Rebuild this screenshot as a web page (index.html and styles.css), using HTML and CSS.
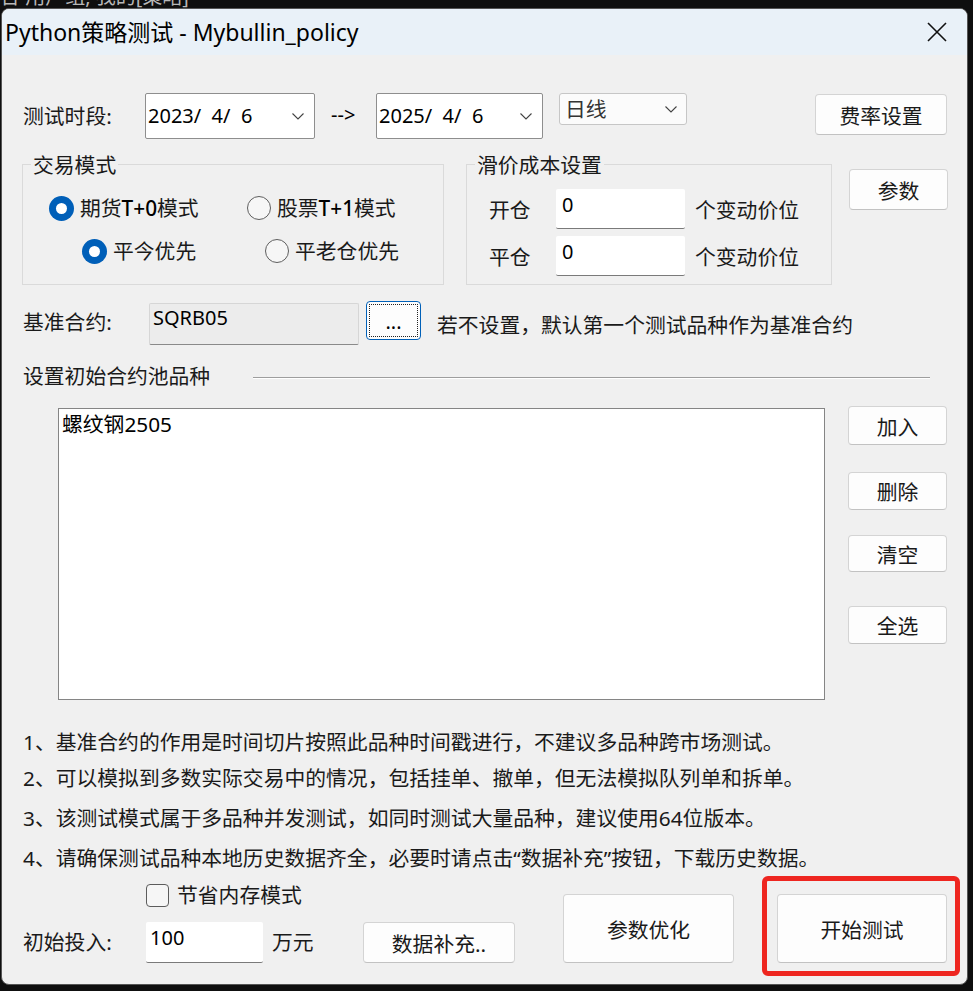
FILE: index.html
```html
<!DOCTYPE html>
<html lang="zh-CN">
<head>
<meta charset="utf-8">
<title>Python策略测试 - Mybullin_policy</title>
<link rel="stylesheet" href="styles.css">
</head>
<body>
<div class="backdrop"><span>合 用户组, 我的[策略]</span></div>
<div class="window">
  <div class="titlebar">
    <span class="title">Python策略测试 - Mybullin_policy</span>
    <svg class="close" viewBox="0 0 20 20" aria-label="关闭"><path d="M1 1 L19 19 M19 1 L1 19" stroke="#111" stroke-width="1.6" fill="none"/></svg>
  </div>
  <div class="content">
    <div class="row row-dates">
      <span class="lbl lbl-date">测试时段:</span>
      <div class="datebox date1"><span class="dtext">2023/  4/  6</span><svg class="chev" viewBox="0 0 12 7"><path d="M0.5 0.5 L6 6 L11.5 0.5" stroke="#444" stroke-width="1.1" fill="none"/></svg></div>
      <span class="arrow">--&gt;</span>
      <div class="datebox date2"><span class="dtext">2025/  4/  6</span><svg class="chev" viewBox="0 0 12 7"><path d="M0.5 0.5 L6 6 L11.5 0.5" stroke="#444" stroke-width="1.1" fill="none"/></svg></div>
      <div class="combo"><span>日线</span><svg class="chev" viewBox="0 0 12 7"><path d="M0.5 0.5 L6 6 L11.5 0.5" stroke="#444" stroke-width="1.1" fill="none"/></svg></div>
      <div class="btn btn-fee">费率设置</div>
    </div>

    <div class="row row-groups">
      <div class="group group-mode">
        <span class="legend">交易模式</span>
        <div class="radio-row">
          <div class="ritem ritem-1"><span class="radio on"></span><span>期货<b class="lat">T+0</b>模式</span></div>
          <div class="ritem"><span class="radio off"></span><span>股票<b class="lat">T+1</b>模式</span></div>
        </div>
        <div class="radio-row radio-row-2">
          <div class="ritem ritem-3"><span class="radio on"></span><span>平今优先</span></div>
          <div class="ritem"><span class="radio off"></span><span>平老仓优先</span></div>
        </div>
      </div>
      <div class="group group-slip">
        <span class="legend">滑价成本设置</span>
        <div class="slip-row">
          <span class="slip-lbl">开仓</span>
          <div class="edit slip-edit">0</div>
          <span class="slip-unit">个变动价位</span>
        </div>
        <div class="slip-row slip-row-2">
          <span class="slip-lbl">平仓</span>
          <div class="edit slip-edit">0</div>
          <span class="slip-unit">个变动价位</span>
        </div>
      </div>
      <div class="btn btn-param">参数</div>
    </div>

    <div class="row row-bench">
      <span class="lbl lbl-bench">基准合约:</span>
      <div class="bench-field">SQRB05</div>
      <div class="btn btn-dots"><span class="focus">...</span></div>
      <span class="bench-hint">若不设置，默认第一个测试品种作为基准合约</span>
    </div>

    <div class="row row-pool">
      <span class="pool-lbl">设置初始合约池品种</span>
      <span class="pool-line"></span>
    </div>

    <div class="row row-list">
      <div class="listbox"><div class="list-item">螺纹钢2505</div></div>
      <div class="list-btns">
        <div class="btn btn-add">加入</div>
        <div class="btn btn-del">删除</div>
        <div class="btn btn-clear">清空</div>
        <div class="btn btn-all">全选</div>
      </div>
    </div>

    <div class="notes">
      <p class="note n1">1、基准合约的作用是时间切片按照此品种时间戳进行，不建议多品种跨市场测试。</p>
      <p class="note n2">2、可以模拟到多数实际交易中的情况，包括挂单、撤单，但无法模拟队列单和拆单。</p>
      <p class="note n3">3、该测试模式属于多品种并发测试，如同时测试大量品种，建议使用64位版本。</p>
      <p class="note n4">4、请确保测试品种本地历史数据齐全，必要时请点击“数据补充”按钮，下载历史数据。</p>
    </div>

    <div class="bottom">
      <div class="bottom-left">
        <div class="cb-row"><span class="checkbox"></span><span class="cb-lbl">节省内存模式</span></div>
        <div class="invest-row">
          <span class="lbl lbl-invest">初始投入:</span>
          <div class="edit invest-edit">100</div>
          <span class="unit">万元</span>
          <div class="btn btn-data">数据补充..</div>
        </div>
      </div>
      <div class="btn btn-opt">参数优化</div>
      <div class="btn btn-start">开始测试</div>
      <div class="highlight"></div>
    </div>
  </div>
</div>
</body>
</html>
```

FILE: styles.css
```css
* { box-sizing: border-box; }
html, body { margin: 0; padding: 0; }
body {
  width: 973px;
  height: 991px;
  overflow: hidden;
  background: #0f0f0f;
  font-family: "Noto Sans", "Noto Sans CJK SC", sans-serif;
  font-size: 20.8px;
  color: #1a1a1a;
}
.backdrop {
  height: 8px;
  overflow: hidden;
  color: #b8b8b8;
  font-size: 20px;
  line-height: 20px;
}
.backdrop span { display: block; margin-top: -13px; }

.window {
  margin-left: 1px;
  width: 967px;
  height: 977px;
  border: 1px solid #555;
  border-radius: 8px;
  background: #f0f0f0;
  overflow: hidden;
  display: flex;
  flex-direction: column;
}
.titlebar {
  flex: none;
  height: 46px;
  background: #e9f1f8;
  display: flex;
  align-items: center;
  justify-content: space-between;
  padding-left: 3px;
  padding-right: 20px;
}
.title { font-size: 23px; line-height: 30px; color: #000; }
.close { width: 20px; height: 20px; display: block; }

.content { position: relative; flex: 1; }
.row { display: flex; align-items: flex-start; }
.lbl { flex: none; white-space: nowrap; }

/* row 1 */
.row-dates { margin-top: 38px; height: 47px; }
.lbl-date { margin-left: 21px; width: 122px; line-height: 46px; }
.datebox {
  flex: none;
  height: 46px;
  background: #fff;
  border: 1px solid #8e8e8e;
  border-radius: 2px;
  display: flex;
  align-items: center;
  justify-content: space-between;
  padding: 0 10px 0 2px;
  font-size: 20px;
  color: #000;
}
.date1 { width: 170px; }
.date2 { width: 167px; margin-left: 16px; }
.dtext { white-space: pre; line-height: 30px; }
.chev { width: 12px; height: 7px; display: block; }
.arrow { margin-left: 16px; width: 29px; line-height: 44px; font-size: 20px; color: #000; white-space: nowrap; }
.combo {
  flex: none;
  margin-left: 16px;
  width: 128px;
  height: 32px;
  background: #fbfbfb;
  border: 1px solid #c6c6c6;
  border-radius: 3px;
  display: flex;
  align-items: center;
  justify-content: space-between;
  padding: 0 9px 0 5px;
  color: #333;
  line-height: 30px;
}
.btn {
  flex: none;
  background: #fdfdfd;
  border: 1px solid #d4d4d4;
  border-bottom-color: #c2c2c2;
  border-radius: 4px;
  display: flex;
  align-items: center;
  justify-content: center;
  color: #1a1a1a;
  white-space: nowrap;
}
.btn-fee { margin-left: 128px; margin-top: 1px; width: 132px; height: 41px; }

/* row 2: groups */
.row-groups { margin-top: 24px; }
.group {
  position: relative;
  flex: none;
  height: 121px;
  border: 1px solid #dadada;
}
.legend {
  position: absolute;
  top: -11px;
  left: 8px;
  padding: 0 2px;
  background: #f0f0f0;
  line-height: 22px;
  white-space: nowrap;
}
.group-mode { margin-left: 20px; width: 422px; padding-top: 30px; }
.radio-row { display: flex; height: 26px; align-items: center; }
.radio-row-2 { margin-top: 17px; }
.ritem { display: flex; align-items: center; gap: 6px; white-space: nowrap; line-height: 26px; }
.ritem-1 { margin-left: 26px; width: 198px; }
.ritem-3 { margin-left: 59px; width: 183px; }
.lat { font-weight: 500; color: #000; }
.radio { flex: none; width: 25px; height: 25px; border-radius: 50%; }
.radio.on {
  background: #005fb8;
  display: flex;
  align-items: center;
  justify-content: center;
}
.radio.on::after {
  content: "";
  width: 11px;
  height: 11px;
  border-radius: 50%;
  background: #fff;
}
.radio.off { width: 24px; height: 24px; border: 1.6px solid #5e5e5e; background: #f6f6f6; }

.group-slip { margin-left: 22px; width: 366px; padding-top: 24px; }
.slip-row { display: flex; align-items: center; height: 40px; }
.slip-row-2 { margin-top: 7px; }
.slip-lbl { margin-left: 22px; width: 67px; white-space: nowrap; }
.edit {
  flex: none;
  background: #fff;
  border-bottom: 1px solid #7a7a7a;
  border-radius: 2px;
  padding-left: 6px;
  font-size: 20px;
  line-height: 31px;
  color: #000;
}
.slip-edit { width: 129px; height: 40px; }
.slip-unit { margin-left: 10px; white-space: nowrap; }
.btn-param { margin-left: 17px; margin-top: 5px; width: 99px; height: 41px; }

/* row 3 */
.row-bench { margin-top: 16px; height: 48px; }
.lbl-bench { margin-left: 21px; width: 126px; line-height: 42px; }
.bench-field {
  flex: none;
  margin-top: 2px;
  width: 210px;
  height: 42px;
  background: #ececec;
  border: 1px solid #d6d6d6;
  border-bottom-color: #8a8a8a;
  border-radius: 2px;
  padding-left: 3px;
  font-size: 20px;
  line-height: 28px;
  color: #000;
}
.btn-dots {
  margin-left: 7px;
  width: 55px;
  height: 39px;
  border-color: #0060b8;
  padding: 2px;
}
.btn-dots .focus {
  width: 100%;
  height: 100%;
  border: 1px dotted #222;
  display: flex;
  align-items: center;
  justify-content: center;
  font-size: 20px;
  color: #000;
  padding-top: 2px;
}
.bench-hint { margin-left: 16px; line-height: 48px; white-space: nowrap; }

/* row 4 */
.row-pool { margin-top: 12px; height: 30px; }
.pool-lbl { margin-left: 21px; width: 230px; line-height: 30px; white-space: nowrap; }
.pool-line {
  margin-top: 16px;
  width: 677px;
  height: 2px;
  border-top: 1px solid #9e9e9e;
  border-bottom: 1px solid #fff;
}

/* row 5 */
.row-list { margin-top: 15px; height: 294px; }
.listbox {
  flex: none;
  margin-left: 56px;
  margin-top: 2px;
  width: 767px;
  height: 292px;
  background: #fff;
  border: 1px solid #858585;
}
.list-item { padding-left: 3px; line-height: 30px; color: #000; }
.list-btns { margin-left: 23px; width: 99px; display: flex; flex-direction: column; }
.list-btns .btn { width: 99px; height: 38px; }
.list-btns .btn-add { height: 39px; }
.list-btns .btn-del { margin-top: 27px; }
.list-btns .btn-clear { margin-top: 25px; height: 37px; }
.list-btns .btn-all { margin-top: 34px; }

/* notes */
.notes { margin-top: 24px; padding-left: 21px; }
.note { margin: 0; white-space: nowrap; line-height: 36px; }
.note.n3 { line-height: 44px; }

/* bottom */
.bottom { position: relative; display: flex; align-items: flex-start; height: 109px; }
.bottom-left { width: 513px; flex: none; }
.cb-row { margin-top: 7px; height: 24px; display: flex; align-items: center; }
.checkbox {
  flex: none;
  margin-left: 144px;
  width: 23px;
  height: 23px;
  border: 1.6px solid #5c5c5c;
  border-radius: 4px;
  background: #f6f6f6;
}
.cb-lbl { margin-left: 8px; white-space: nowrap; line-height: 24px; }
.invest-row { margin-top: 15px; height: 41px; display: flex; align-items: flex-start; }
.lbl-invest { margin-left: 21px; width: 123px; line-height: 41px; }
.invest-edit { width: 117px; height: 41px; padding-left: 4px; }
.unit { flex: none; width: 100px; padding-left: 9px; line-height: 41px; white-space: nowrap; }
.btn-data { width: 152px; height: 41px; }
.btn-opt { margin-left: 48px; margin-top: 18px; width: 171px; height: 69px; }
.btn-start { margin-left: 43px; margin-top: 18px; width: 170px; height: 69px; }
.highlight {
  position: absolute;
  left: 760px;
  top: 0;
  width: 198px;
  height: 100px;
  border: 5px solid #ee2620;
  border-radius: 6px;
}
```
